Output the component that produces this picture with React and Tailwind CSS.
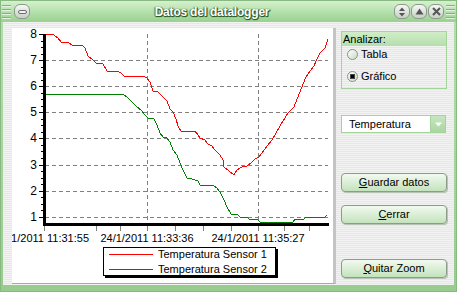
import React from "react";

const red = [
  [44, 34], [53, 34], [55, 36], [58, 38], [61, 42], [68, 42], [72, 45], [82, 45], [85, 48], [88, 56],
  [93, 60], [96, 63], [103, 64], [107, 71], [117, 71], [121, 73], [124, 76], [143, 76], [147, 78],
  [150, 82], [153, 91], [157, 91], [160, 94], [163, 97], [167, 101], [170, 109], [173, 112], [176, 119],
  [178, 126], [181, 131], [195, 131], [198, 135], [200, 138], [205, 140], [208, 144], [212, 146],
  [215, 150], [217, 152], [220, 155], [223, 160], [224, 167], [229, 171], [234, 175], [237, 170],
  [242, 167], [247, 166], [252, 162], [255, 159], [259, 157], [262, 153], [267, 146], [272, 140],
  [276, 133], [280, 126], [283, 121], [288, 113], [294, 107], [297, 99], [300, 92], [303, 84],
  [306, 77], [310, 71], [314, 66], [316, 61], [320, 53], [325, 48], [327, 42], [328, 39],
];

const green = [
  [44, 94], [123, 94], [127, 97], [130, 100], [134, 104], [137, 107], [141, 110], [145, 115],
  [148, 118], [154, 119], [157, 125], [160, 133], [163, 137], [167, 138], [170, 142], [173, 150],
  [177, 155], [180, 163], [183, 170], [187, 178], [192, 179], [198, 181], [200, 185], [213, 185],
  [217, 188], [220, 192], [224, 200], [227, 207], [231, 214], [237, 214], [240, 217], [247, 217],
  [249, 219], [257, 219], [260, 222], [293, 222], [295, 219], [304, 219], [306, 217], [325, 217],
  [327, 215],
];

const gridY = [60, 86, 112, 138, 165, 191, 217];
const xTicks = [44, 96, 120, 147, 175, 203, 231, 258, 284, 309];

function pts(a) {
  return a.map((p) => p.join(",")).join(" ");
}

function Chart() {
  const minor = [];
  for (let i = 0; i <= 28; i++) {
    const y = Math.round(34 + i * 6.525);
    minor.push(<line key={i} x1={i % 4 === 0 ? 39 : 41} y1={y} x2={43} y2={y} stroke="#000" />);
  }
  return (
    <svg width="321" height="255" viewBox="12 28 321 255" shapeRendering="crispEdges" className="block">
      {gridY.map((y) => (
        <line key={y} x1={45} y1={y + 0.5} x2={328} y2={y + 0.5} stroke="#808080" strokeDasharray="4 3" />
      ))}
      {[147, 258].map((x) => (
        <line key={x} x1={x + 0.5} y1={34} x2={x + 0.5} y2={223} stroke="#808080" strokeDasharray="4 3" />
      ))}
      {minor}
      {xTicks.map((x) => (
        <line key={x} x1={x + 0.5} y1={226} x2={x + 0.5} y2={231} stroke="#808080" />
      ))}
      <polyline points={pts(green)} fill="none" stroke="#008000" strokeWidth="1" />
      <polyline points={pts(red)} fill="none" stroke="#ff0000" strokeWidth="1" />
      <rect x="43" y="34" width="3" height="192" fill="#000" />
      <rect x="43" y="223" width="286" height="3" fill="#000" />
      <g fontFamily="'Liberation Sans', Arial, sans-serif" fontSize="11" fill="#000">
        {[8, 7, 6, 5, 4, 3, 2, 1].map((v, i) => (
          <text key={v} x="37" y={[38, 64, 90, 116, 142, 169, 195, 221][i]} textAnchor="end" fontSize="12">
            {v}
          </text>
        ))}
        <text x="89" y="242" textAnchor="end">1/2011 11:31:55</text>
        <text x="147" y="242" textAnchor="middle">24/1/2011 11:33:36</text>
        <text x="258" y="242" textAnchor="middle">24/1/2011 11:35:27</text>
        <rect x="105" y="249" width="173" height="29" fill="#000" />
        <rect x="103.5" y="247.5" width="172" height="28" fill="#fff" stroke="#000" />
        <line x1="109" y1="254.5" x2="153" y2="254.5" stroke="#ff0000" />
        <line x1="109" y1="269.5" x2="153" y2="269.5" stroke="#008000" />
        <text x="158" y="258">Temperatura Sensor 1</text>
        <text x="158" y="273">Temperatura Sensor 2</text>
      </g>
    </svg>
  );
}

function Grip() {
  return (
    <div className="flex flex-col gap-[2px] w-[9px]">
      {[0, 1, 2, 3].map((i) => (
        <div key={i} className="h-[2px] border-t border-[#7db575] border-b border-b-[#e2f4de]" />
      ))}
    </div>
  );
}

function TitleButton({ children }) {
  return (
    <div className="w-[16px] h-[15px] rounded-[6px] border border-[#8c9a8a] bg-gradient-to-b from-[#f6f8f6] to-[#c6d0c6] flex items-center justify-center">
      {children}
    </div>
  );
}

function Radio({ checked }) {
  return (
    <div className="w-[11px] h-[11px] rounded-full border border-[#7f9a7a] bg-gradient-to-br from-[#ffffff] to-[#c9dcc5] flex items-center justify-center">
      {checked && <div className="w-[5px] h-[5px] bg-black border border-[#444]" />}
    </div>
  );
}

function Btn({ first, rest, className }) {
  return (
    <div
      className={
        "h-[19px] w-[106px] rounded-[4px] border border-[#8e9a8c] bg-gradient-to-b from-[#f2faf0] to-[#c4e2bd] shadow-[1px_1px_0_#b8c4b6] flex items-center justify-center text-[11px] text-black " +
        className
      }
    >
      <span>
        <span className="underline">{first}</span>
        {rest}
      </span>
    </div>
  );
}

export default function App() {
  return (
    <div className="w-[457px] h-[292px] flex flex-col bg-gradient-to-b from-[#b4dfac] to-[#97cc8e] border border-[#88b980] font-['Liberation_Sans',Arial,sans-serif] text-[11px] text-black overflow-hidden">
      {/* title bar */}
      <div className="h-[21px] flex items-center bg-gradient-to-b from-[#d6f0cf] via-[#b5e1ac] to-[#9ad090] px-[1px]">
        <Grip />
        <div className="ml-[3px]">
          <TitleButton>
            <div className="w-[9px] h-[4px] rounded-[2px] border border-[#6b6b6b] bg-[#f4f4f4]" />
          </TitleButton>
        </div>
        <div className="flex-1 text-center text-white font-bold text-[12px] tracking-[-0.2px] [text-shadow:1px_1px_0_#2c5a26,0_1px_1px_#2c5a26,1px_0_1px_#3f7436,-1px_0_1px_#4f8446]">
          Datos del datalogger
        </div>
        <div className="flex gap-[1px] mr-[2px]">
          <TitleButton>
            <svg width="8" height="10" viewBox="0 0 8 10">
              <path d="M4 0.5 L7 4 L1 4 Z M4 9.5 L7 6 L1 6 Z" fill="#555" />
            </svg>
          </TitleButton>
          <TitleButton>
            <svg width="9" height="7" viewBox="0 0 9 7">
              <path d="M4.5 0.5 L8.5 6.5 L0.5 6.5 Z" fill="#555" />
            </svg>
          </TitleButton>
          <TitleButton>
            <svg width="9" height="9" viewBox="0 0 9 9">
              <path d="M1 1 L8 8 M8 1 L1 8" stroke="#555" strokeWidth="2" />
            </svg>
          </TitleButton>
        </div>
        <Grip />
      </div>

      {/* body */}
      <div className="flex-1 mx-[2px] mb-[6px] flex bg-[repeating-linear-gradient(to_bottom,#f3f3f3_0px,#f3f3f3_1px,#e7e7e7_1px,#e7e7e7_2px)]">
        <div className="ml-[9px] mt-[6px] mb-[1px] w-[324px] bg-white border-r-[3px] border-r-[#c4c4c4] border-b border-b-[#a8a8a8]">
          <Chart />
        </div>

        <div className="ml-[5px] mt-[9px] w-[106px] flex flex-col">
          <div className="h-[58px] border border-[#a4d49c] bg-[repeating-linear-gradient(to_bottom,#f3f3f3_0px,#f3f3f3_1px,#e7e7e7_1px,#e7e7e7_2px)]">
            <div className="h-[14px] bg-gradient-to-b from-[#d0edc8] to-[#b4dfab] px-[1px] leading-[14px]">Analizar:</div>
            <div className="h-[13px] flex items-center gap-[3px] pl-[5px] mt-[2px]">
              <Radio />
              <span>Tabla</span>
            </div>
            <div className="h-[13px] flex items-center gap-[3px] pl-[5px] mt-[9px]">
              <Radio checked />
              <span>Gráfico</span>
            </div>
          </div>

          <div className="mt-[26px] h-[18px] w-[105px] border border-[#a4d49c] bg-white flex items-stretch">
            <div className="flex-1 pl-[7px] leading-[16px]">Temperatura</div>
            <div className="w-[15px] bg-gradient-to-b from-[#c6e6bf] to-[#a9d7a0] border-l border-[#a4d49c] flex items-center justify-center">
              <svg width="7" height="5" viewBox="0 0 7 5">
                <path d="M0 0.5 L7 0.5 L3.5 4.5 Z" fill="#fff" />
              </svg>
            </div>
          </div>

          <Btn first="G" rest="uardar datos" className="mt-[40px]" />
          <Btn first="C" rest="errar" className="mt-[13px]" />
          <Btn first="Q" rest="uitar Zoom" className="mt-[35px]" />
        </div>
      </div>
    </div>
  );
}
